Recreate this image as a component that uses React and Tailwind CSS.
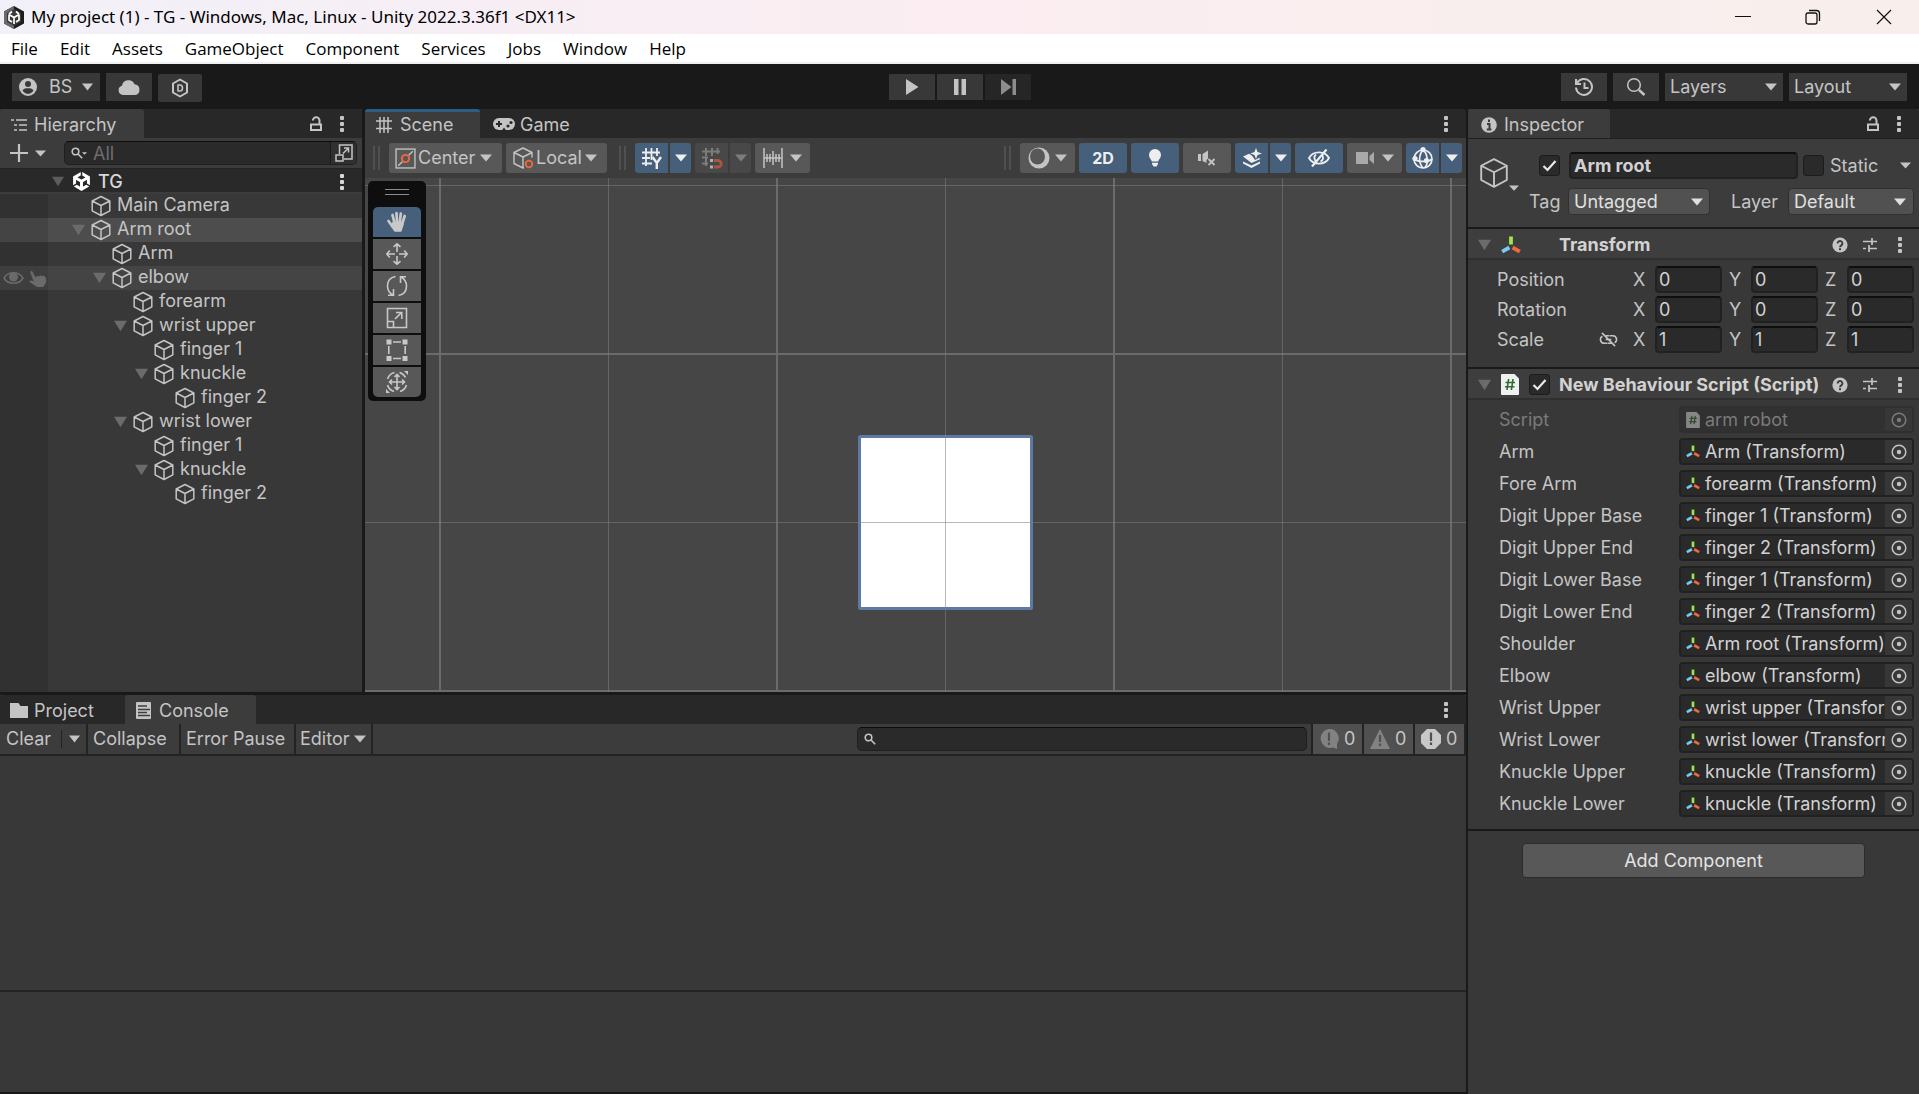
import React from "react";
import { SiUnity } from "react-icons/si";

/* ---------- icons ---------- */

const Arrow = ({ className = "w-[12px] h-[8px]" }) => (
  <svg viewBox="0 0 12 8" preserveAspectRatio="none" className={"shrink-0 " + className} fill="currentColor" aria-hidden="true">
    <path d="M0 .5h12L6 7.5z" />
  </svg>
);

const Dots = () => (
  <svg viewBox="0 0 6 18" className="w-[6px] h-[18px] shrink-0" fill="currentColor" aria-hidden="true">
    <rect x="1" y="1" width="4" height="4" rx="1" />
    <rect x="1" y="7" width="4" height="4" rx="1" />
    <rect x="1" y="13" width="4" height="4" rx="1" />
  </svg>
);

const Lock = () => (
  <svg viewBox="0 0 14 16" className="w-[14px] h-[16px] shrink-0" fill="none" stroke="currentColor" strokeWidth="2" aria-hidden="true">
    <path d="M2 8.500h10V14H2zM10.500 8V4.500a3.300 3.300 0 0 0-6.600 0" />
  </svg>
);

const Cube = ({ className = "w-[20px] h-[22px]", sw = 1.5 }) => (
  <svg viewBox="0 0 20 22" className={"shrink-0 " + className} fill="none" stroke="currentColor" strokeWidth={sw} strokeLinejoin="round" aria-hidden="true">
    <path d="M10 1.500 18.800 6v9.800L10 20.500 1.200 15.800V6zM1.200 6 10 10.500 18.800 6M10 10.500v10" />
  </svg>
);

const Axes = ({ className = "w-[14px] h-[15px]" }) => (
  <svg viewBox="0 0 20 18" className={"shrink-0 " + className} fill="none" strokeWidth="3.800" aria-hidden="true">
    <path d="M10 .5v8" stroke="#9fe64c" />
    <path d="M8.400 11.500 1.200 15.600" stroke="#7cc9f5" />
    <path d="M11.600 11.500l7.200 4.100" stroke="#f2683c" />
  </svg>
);

const ScriptIcon = ({ className = "w-[18px] h-[21px]" }) => (
  <svg viewBox="0 0 18 21" className={"shrink-0 " + className} aria-hidden="true">
    <path d="M1 0h12.500L18 4.500V20a1 1 0 0 1-1 1H1a1 1 0 0 1-1-1V1a1 1 0 0 1 1-1z" fill="#f0f0f0" />
    <path d="M7.600 5 6 16M12 5l-1.600 11M4.500 8.500h9.500M4 12.700h9.500" stroke="#2f6b2f" strokeWidth="1.600" fill="none" />
  </svg>
);

const Target = () => (
  <svg viewBox="0 0 16 16" className="w-[16px] h-[16px]" aria-hidden="true">
    <circle cx="8" cy="8" r="6.800" fill="none" stroke="currentColor" strokeWidth="1.500" />
    <circle cx="8" cy="8" r="2.200" fill="currentColor" />
  </svg>
);

const Help = () => (
  <svg viewBox="0 0 16 16" className="w-[16px] h-[16px]" aria-hidden="true">
    <circle cx="8" cy="8" r="7.600" fill="currentColor" />
    <path d="M5.600 6.400a2.400 2.400 0 1 1 3.700 2c-.9.6-1.300.9-1.300 1.800" stroke="#3c3c3c" strokeWidth="1.900" fill="none" />
    <rect x="7" y="11.200" width="2" height="2" fill="#3c3c3c" />
  </svg>
);

const Preset = () => (
  <svg viewBox="0 0 16 16" className="w-[16px] h-[16px]" fill="none" stroke="currentColor" strokeWidth="1.700" aria-hidden="true">
    <path d="M1 4.500h8.500M10 1v7M10 4.500h5M1 11.500h3M7 8v7M7 11.500h8" />
  </svg>
);

const GridHash = ({ className = "w-[16px] h-[16px]" }) => (
  <svg viewBox="0 0 16 16" className={"shrink-0 " + className} fill="none" stroke="currentColor" strokeWidth="1.500" aria-hidden="true">
    <path d="M4 0v16M8 0v16M12 0v16M0 4h16M0 11.500h16" />
  </svg>
);

const Magnifier = ({ className = "w-[12px] h-[12px]", sw = 1.600 }) => (
  <svg viewBox="0 0 12 12" className={"shrink-0 " + className} fill="none" stroke="currentColor" strokeWidth={sw} aria-hidden="true">
    <circle cx="4.500" cy="4.500" r="3.300" />
    <path d="m7 7 4.200 4.200" />
  </svg>
);

/* ---------- shared controls ---------- */

const Tick = ({ on, label }) => (
  <span className="relative flex size-[21px] shrink-0">
    <input
      type="checkbox"
      defaultChecked={on}
      aria-label={label}
      className="peer size-full appearance-none rounded-[3px] border border-[#1c1c1c] bg-[#2a2a2a]"
    />
    <svg viewBox="0 0 21 21" className="pointer-events-none absolute inset-0 hidden peer-checked:block" fill="none" stroke="#e8e8e8" strokeWidth="2.200" aria-hidden="true">
      <path d="m4.500 11 4 4 8-9" />
    </svg>
  </span>
);

const Drop = ({ value, label, className, arrow = "right-[6px]", pad = "pl-[5px]" }) => (
  <span className={"relative flex items-center " + className}>
    <select aria-label={label} className={"size-full appearance-none bg-transparent outline-none " + pad}>
      <option>{value}</option>
    </select>
    <span className={"pointer-events-none absolute " + arrow}>
      <Arrow />
    </span>
  </span>
);

const Grip = () => <span className="h-[24px] w-[7px] shrink-0 border-x-2 border-[#505050]" />;

/* ---------- window chrome ---------- */

const TitleBar = () => (
  <header className="flex h-[34px] shrink-0 items-center bg-linear-to-r from-[#f2f0f8] via-[#fbedf1] to-[#f8efec] pl-[4px] font-['Noto_Sans',sans-serif] text-[17px] text-black">
    <svg viewBox="0 0 20 23" className="h-[23px] w-[20px]" aria-hidden="true">
      <path d="M10 0l10 5.500v12L10 23 0 17.500v-12z" fill="#1d1d1d" />
      <path d="M10 0 0 5.500v12L10 23z" fill="#6a6a6a" />
      <path d="M10 3 3 7v9l7 4 7-4V7z" fill="#3a3a3a" />
      <path d="M10 11.500V18M10 11.500 5 8.500M10 11.500l5-3M5 8.500V14l3 2M15 8.500V14l-3 2M8 5.500 5 8M12 5.500 15 8" stroke="#fff" strokeWidth="1.700" fill="none" />
    </svg>
    <h1 className="ml-[7px] whitespace-nowrap">My project (1) - TG - Windows, Mac, Linux - Unity 2022.3.36f1 &lt;DX11&gt;</h1>
    <div className="ml-auto flex h-full">
      <button aria-label="Minimize" className="grid w-[70px] place-items-center">
        <svg viewBox="0 0 16 16" className="size-[16px]" stroke="#111" fill="none"><path d="M0 7.500h16" /></svg>
      </button>
      <button aria-label="Restore" className="grid w-[70px] place-items-center">
        <svg viewBox="0 0 16 16" className="size-[16px]" stroke="#111" fill="none" strokeWidth="1.300">
          <rect x="1" y="4" width="11" height="11" rx="2" />
          <path d="M4 1.500h7.500a3 3 0 0 1 3 3V12" />
        </svg>
      </button>
      <button aria-label="Close" className="grid w-[71px] place-items-center">
        <svg viewBox="0 0 16 16" className="size-[16px]" stroke="#111" fill="none" strokeWidth="1.200"><path d="m1 1 14 14M15 1 1 15" /></svg>
      </button>
    </div>
  </header>
);

const MENUS = ["File", "Edit", "Assets", "GameObject", "Component", "Services", "Jobs", "Window", "Help"];

const MenuBar = () => (
  <nav className="flex h-[30px] shrink-0 items-center gap-[22px] border-b-2 border-[#f0f0f0] bg-white pt-[2px] pl-[11px] font-['Open_Sans','Noto_Sans',sans-serif] text-[17px] text-black">
    {MENUS.map((m) => (
      <button key={m}>{m}</button>
    ))}
  </nav>
);

const MainToolbar = () => (
  <div className="grid h-[45px] shrink-0 grid-cols-[1fr_auto_1fr] items-center bg-[#191919] px-[12px]">
    <div className="flex items-center gap-[6px]">
      <button className="flex h-[28px] w-[88px] items-center bg-[#383838] pl-[7px]">
        <svg viewBox="0 0 18 18" className="size-[18px]" aria-hidden="true">
          <circle cx="9" cy="9" r="9" fill="#c4c4c4" />
          <circle cx="9" cy="6" r="3" fill="#383838" />
          <path d="M3.500 12.500C5 10.500 6.500 10.300 9 10.300s4 .2 5.500 2.200C13 15 11 15.800 9 15.800S5 15 3.500 12.500z" fill="#383838" />
        </svg>
        <span className="ml-[12px]">BS</span>
        <Arrow className="ml-[10px] h-[8px] w-[11px]" />
      </button>
      <button aria-label="Cloud services" className="grid h-[28px] w-[46px] place-items-center bg-[#383838]">
        <svg viewBox="0 0 22 16" className="h-[16px] w-[22px]" fill="currentColor"><path d="M5 16a4.700 4.700 0 0 1-1-9.200A6.500 6.500 0 0 1 16.500 5.300 5.400 5.400 0 0 1 17 16z" /></svg>
      </button>
      <button aria-label="Version control" className="mt-[2px] grid h-[28px] w-[44px] place-items-center rounded-[2px] bg-[#383838]">
        <svg viewBox="0 0 18 20" className="h-[20px] w-[18px]" fill="none" stroke="currentColor" strokeWidth="2" strokeLinejoin="round">
          <path d="m9 1.500 7 4v9l-7 4-7-4v-9z" />
          <path d="M7 7h2a2.500 3 0 0 1 0 6H7z" strokeWidth="1.600" />
        </svg>
      </button>
    </div>
    <div className="flex gap-[2px]">
      <button aria-label="Play" className="grid h-[26px] w-[46px] place-items-center bg-[#383838]">
        <svg viewBox="0 0 14 16" className="h-[16px] w-[14px]" fill="currentColor"><path d="M1 0l12.500 8L1 16z" /></svg>
      </button>
      <button aria-label="Pause" className="grid h-[26px] w-[46px] place-items-center bg-[#383838]">
        <svg viewBox="0 0 12 16" className="h-[16px] w-[12px]" fill="currentColor"><path d="M0 0h4.500v16H0zM7.500 0H12v16H7.500z" /></svg>
      </button>
      <button aria-label="Step" className="grid h-[26px] w-[46px] place-items-center bg-[#262626] text-[#8c8c8c]">
        <svg viewBox="0 0 16 16" className="size-[16px]" fill="currentColor"><path d="M1 0l10.500 8L1 16zM12.500 0H16v16h-3.500z" /></svg>
      </button>
    </div>
    <div className="flex items-center justify-end gap-[6px]">
      <button aria-label="Undo history" className="grid h-[28px] w-[46px] place-items-center bg-[#383838]">
        <svg viewBox="0 0 20 20" className="size-[20px]" fill="none" stroke="currentColor" strokeWidth="2">
          <path d="M3 6a8 8 0 1 1-1 4.500M2 2v5h5M10.500 5.500V11h4" />
        </svg>
      </button>
      <button aria-label="Search" className="grid h-[28px] w-[46px] place-items-center bg-[#383838]">
        <svg viewBox="0 0 20 20" className="size-[20px]" fill="none" stroke="currentColor">
          <circle cx="8" cy="8" r="6.300" strokeWidth="1.500" />
          <path d="m13 13 5.500 5" strokeWidth="2.500" />
        </svg>
      </button>
      <Drop label="Layers" value="Layers" className="h-[28px] w-[118px] bg-[#383838]" />
      <Drop label="Layout" value="Layout" className="h-[28px] w-[118px] bg-[#383838]" />
    </div>
  </div>
);

/* ---------- hierarchy ---------- */

const NODES = [
  { name: "Main Camera", depth: 0 },
  { name: "Arm root", depth: 0, open: true, row: "bg-[#4d4d4d]", gutter: "bg-[#444444]" },
  { name: "Arm", depth: 1 },
  { name: "elbow", depth: 1, open: true, row: "bg-[#444444]", gutter: "bg-[#3e3e3e]", hover: true },
  { name: "forearm", depth: 2 },
  { name: "wrist upper", depth: 2, open: true },
  { name: "finger 1", depth: 3 },
  { name: "knuckle", depth: 3, open: true },
  { name: "finger 2", depth: 4 },
  { name: "wrist lower", depth: 2, open: true },
  { name: "finger 1", depth: 3 },
  { name: "knuckle", depth: 3, open: true },
  { name: "finger 2", depth: 4 },
];

const INDENT = ["pl-[24px]", "pl-[45px]", "pl-[66px]", "pl-[87px]", "pl-[108px]"];

const Hierarchy = () => (
  <section className="flex w-[362px] shrink-0 flex-col overflow-hidden">
    <div className="flex h-[29px] shrink-0 items-center rounded-t-[3px] bg-[#282828]">
      <div className="flex h-full w-[144px] items-center gap-[7px] rounded-t-[3px] bg-[#3c3c3c] pt-[2px] pl-[11px]">
        <svg viewBox="0 0 16 14" className="h-[14px] w-[16px]" fill="none" stroke="currentColor" strokeWidth="1.600">
          <path d="M0 2h3M5 2h11M3 7h3M8 7h8M3 12h3M8 12h8" />
        </svg>
        Hierarchy
      </div>
      <button aria-label="Lock hierarchy" className="ml-auto"><Lock /></button>
      <button aria-label="Hierarchy menu" className="mr-[17px] ml-[16px]"><Dots /></button>
    </div>
    <div className="flex h-[31px] shrink-0 items-center border-b border-[#232323] bg-[#3c3c3c] pl-[10px] pr-[5px]">
      <button aria-label="Create" className="flex items-center gap-[7px]">
        <svg viewBox="0 0 18 18" className="size-[18px]" stroke="currentColor" strokeWidth="2.200"><path d="M9 0v18M0 9h18" /></svg>
        <Arrow className="h-[7px] w-[11px]" />
      </button>
      <div className="ml-[18px] flex h-[24px] min-w-0 flex-1 items-center overflow-hidden rounded-[5px] border border-[#1f1f1f] border-t-[#0d0d0d] bg-[#2a2a2a] pl-[6px]">
        <Magnifier />
        <Arrow className="-ml-px h-[3px] w-[5px]" />
        <input aria-label="Search hierarchy" placeholder="All" className="ml-[6px] h-full min-w-0 flex-1 bg-transparent outline-none placeholder:text-[#6e6e6e]" />
        <button aria-label="Open in search" className="grid h-full w-[26px] shrink-0 place-items-center border-l border-[#1a1a1a] bg-[#303030]">
          <svg viewBox="0 0 18 18" className="size-[18px]" fill="none" stroke="currentColor" strokeWidth="1.500">
            <path d="M4.500 10V1h12.500v14H9M1 11h7v6H1zM8 9.500l5.500-5.500M9 4h4.500v4.500" />
          </svg>
        </button>
      </div>
    </div>
    <div className="flex h-[25px] shrink-0 items-center border-b-2 border-[#3c3c3c] bg-[#292929] pt-[2px] pl-[52px] font-medium text-[#d8d8d8]">
      <Arrow className="h-[11px] w-[12px] text-[#5c5c5c]" />
      <SiUnity className="ml-[8px] size-[19px] text-white" />
      <span className="ml-[7px] flex-1">TG</span>
      <button aria-label="Scene menu" className="mr-[17px]"><Dots /></button>
    </div>
    <ul className="flex min-h-0 flex-1 flex-col">
      {NODES.map((n, i) => (
        <li key={i} className="flex h-[24px] shrink-0">
          <span className={"flex w-[48px] shrink-0 items-center justify-center gap-[5px] text-[#6a6a6a] " + (n.gutter || "bg-[#313131]")}>
            {n.hover && (
              <>
                <svg viewBox="0 0 21 14" className="h-[14px] w-[21px]" fill="none" stroke="currentColor" strokeWidth="1.600">
                  <path d="M1 7C5 0 16 0 20 7 16 14 5 14 1 7z" />
                  <circle cx="10.500" cy="6" r="4.500" fill="currentColor" stroke="none" />
                </svg>
                <svg viewBox="0 0 18 18" className="size-[17px]" fill="currentColor">
                  <path d="M1.500 1.500c.9-.9 2-.5 2.500.5l3 6 1.500-2 2 1 1.500-1.500 2 1.200 1.800-.8L18 8.500v5L15 18H8.500L1 13c-.8-1 0-2 1-2l3 .8L1.500 3.500z" />
                </svg>
              </>
            )}
          </span>
          <span className={"flex flex-1 items-center " + INDENT[n.depth] + " " + (n.row || "")}>
            <span className="w-[19px] text-[#6b6b6b]">{n.open && <Arrow className="h-[12px] w-[13px]" />}</span>
            <Cube />
            <span className="ml-[6px] pb-[2px] whitespace-nowrap">{n.name}</span>
          </span>
        </li>
      ))}
      <li className="w-[48px] flex-1 bg-[#313131]" />
    </ul>
  </section>
);

/* ---------- scene view ---------- */

const TBtn = ({ label, on, w = "w-[48px]", r = "rounded-[3px]", dim, children }) => (
  <button
    aria-label={label}
    className={"flex h-[30px] shrink-0 items-center justify-center " + w + " " + r + " " + (on ? "bg-[#46607c] text-[#eeeeee]" : dim ? "bg-[#484848] text-[#7c7c7c]" : "bg-[#585858] text-[#c4c4c4]")}
  >
    {children}
  </button>
);

const SceneToolbar = () => (
  <div className="flex h-[40px] shrink-0 items-center gap-[4px] bg-[#3c3c3c] pl-[8px] pr-[4px]">
    <Grip />
    <label className="ml-[5px] flex h-[30px] w-[113px] shrink-0 items-center rounded-[3px] bg-[#585858] pl-[6px]">
      <svg viewBox="0 0 20 20" className="size-[21px] shrink-0" fill="none" stroke="#c4c4c4" strokeWidth="1.300" aria-hidden="true">
        <rect x="1" y="1" width="18" height="18" />
        <path d="m3 17 4-4M13 7l4-4" />
        <circle cx="10" cy="10" r="3.500" stroke="#f2683c" strokeWidth="1.800" />
      </svg>
      <Drop label="Handle position" value="Center" pad="pl-[2px]" arrow="right-[10px]" className="h-full flex-1" />
    </label>
    <label className="flex h-[30px] w-[101px] shrink-0 items-center rounded-[3px] bg-[#585858] pl-[6px]">
      <svg viewBox="0 0 22 22" className="size-[22px] shrink-0" fill="none" stroke="#c4c4c4" strokeWidth="1.400" strokeLinejoin="round" aria-hidden="true">
        <path d="M12 20.500 11 21l-9-4.500v-11L11 1l9 4.500v5M2 5.500 11 10l9-4.500M11 10v11" />
        <circle cx="17" cy="17" r="3.300" stroke="#f2683c" strokeWidth="1.800" />
      </svg>
      <Drop label="Handle rotation" value="Local" pad="pl-[2px]" arrow="right-[10px]" className="h-full flex-1" />
    </label>
    <span className="ml-[8px] flex"><Grip /></span>
    <div className="ml-[5px] flex gap-[2px]">
      <TBtn label="Grid visibility" on w="w-[33px]" r="rounded-l-[3px]">
        <svg viewBox="0 0 22 22" className="size-[22px]" fill="none" stroke="currentColor" strokeWidth="1.800">
          <path d="M5 1v18M10.500 1v12M16 1v8M1 5.500h18M1 11h8M1 16.500h10" />
          <path d="m11.500 10 4.300 6 4.200-6M15.800 15v7" strokeWidth="2.400" />
        </svg>
      </TBtn>
      <TBtn label="Grid options" on w="w-[21px]" r="rounded-r-[3px]"><Arrow /></TBtn>
    </div>
    <div className="flex gap-[2px]">
      <TBtn label="Grid snapping" dim w="w-[33px]" r="rounded-l-[3px]">
        <svg viewBox="0 0 22 22" className="size-[22px]" fill="none" stroke="currentColor" strokeWidth="2">
          <path d="M5 1v8M11 1v8M16.500 1v6M1 4.500h18M1 10.500h6M5 10v9M1 16.500h6" />
          <path d="M13 13.500h4a3.200 3.200 0 0 1 0 6.500h-4" stroke="#a85640" strokeWidth="2.800" />
          <path d="M9 13.500h3M9 20h3" stroke="#b0b0b0" strokeWidth="2.800" />
        </svg>
      </TBtn>
      <TBtn label="Snap options" dim w="w-[21px]" r="rounded-r-[3px]"><Arrow /></TBtn>
    </div>
    <TBtn label="Snap increment" w="w-[55px]">
      <svg viewBox="0 0 20 20" className="mr-[7px] size-[20px]" fill="none" stroke="currentColor" strokeWidth="1.500">
        <path d="M1 0v20M19 0v20M1 10h18M4 6v8M7 6v8M10 3v14M13 6v8M16 6v8" />
      </svg>
      <Arrow />
    </TBtn>
    <span className="ml-auto flex"><Grip /></span>
    <span className="w-[1px]" />
    <TBtn label="Draw mode" w="w-[55px]">
      <svg viewBox="0 0 22 22" className="mr-[5px] size-[22px]" aria-hidden="true">
        <circle cx="11" cy="11" r="10.500" fill="#c4c4c4" />
        <ellipse cx="9.500" cy="9.500" rx="7.500" ry="8" fill="#585858" />
      </svg>
      <Arrow />
    </TBtn>
    <TBtn on><span className="text-[16px] font-bold">2D</span></TBtn>
    <TBtn label="Scene lighting" on>
      <svg viewBox="0 0 14 18" className="h-[18px] w-[14px]" fill="currentColor">
        <path d="M7 0a6 6 0 0 1 6 6c0 3-2.500 4.500-2.800 6.500H3.800C3.500 10.500 1 9 1 6a6 6 0 0 1 6-6zM4 13.800h6V15l-1.500 2.500h-3L4 15z" />
      </svg>
    </TBtn>
    <TBtn label="Scene audio">
      <svg viewBox="0 0 18 16" className="h-[16px] w-[18px]" fill="currentColor">
        <path d="M0 4h3v7H0zM4.500 4 10 .5v8L8.500 10v3L4.500 11z" />
        <path d="m10.500 9 6 6M16.500 9l-6 6" stroke="currentColor" strokeWidth="1.800" />
      </svg>
    </TBtn>
    <div className="flex gap-[2px]">
      <TBtn label="Effects" on w="w-[33px]" r="rounded-l-[3px]">
        <svg viewBox="0 0 20 20" className="size-[20px]" fill="currentColor">
          <path d="M14 0l1.500 4L20 5.500 15.500 7 14 11l-1.500-4L8.500 5.500l4-1.500z" />
          <path d="M1 8.500 7 5.800l2.500 1.500L11 9l2 3 4-2 1.500 1L9.500 15z" />
          <path d="M1 13.500 9.500 17.500l8.500-4v2L9.500 20 1 15.500z" />
        </svg>
      </TBtn>
      <TBtn label="Effects options" on w="w-[21px]" r="rounded-r-[3px]"><Arrow /></TBtn>
    </div>
    <TBtn label="Hidden objects" on>
      <svg viewBox="0 0 22 18" className="h-[18px] w-[22px]" fill="none" stroke="currentColor" strokeWidth="1.900">
        <path d="M1 9C5 1.500 17 1.500 21 9 17 16.500 5 16.500 1 9z" />
        <path d="M8 5.500a4 4 0 0 0 1 7M14 6a4 4 0 0 1-1.500 6.500" />
        <path d="M18.500.5 4 17.500" strokeWidth="2.200" />
      </svg>
    </TBtn>
    <TBtn label="Camera settings" w="w-[55px]">
      <svg viewBox="0 0 18 14" className="mr-[8px] h-[14px] w-[18px]" fill="#a9a9a9"><path d="M0 1h12v12H0zM13.500 5 18 1v12l-4.500-4z" /></svg>
      <Arrow />
    </TBtn>
    <div className="flex gap-[2px]">
      <TBtn label="Gizmos" on w="w-[33px]" r="rounded-l-[3px]">
        <svg viewBox="0 0 22 22" className="size-[22px]" fill="none" stroke="currentColor" strokeWidth="1.700">
          <circle cx="11" cy="12" r="9" />
          <path d="M11 3c-4.500 5-4.500 13 0 18M11 3c4.500 3 6 14 1.500 18M2 12c4 3 14 3.500 18 0" />
          <g fill="currentColor" stroke="none"><circle cx="11" cy="2.600" r="2.600" /><circle cx="3" cy="11.500" r="2.600" /><circle cx="14.500" cy="13.500" r="2.600" /></g>
        </svg>
      </TBtn>
      <TBtn label="Gizmo options" on w="w-[21px]" r="rounded-r-[3px]"><Arrow /></TBtn>
    </div>
  </div>
);

const TOOLS = [
  {
    label: "View tool",
    on: true,
    icon: (
      <g fill="none" stroke="currentColor" strokeWidth="2.700" strokeLinecap="round">
        <path d="M8.500 12 6.500 4M11 11 10.500 2.200M13.800 11 14.800 2.500M16.300 12.500 18.700 5M6.500 15.500 2.500 10" />
        <path d="M7 11.500h9.500l.5 2-2.200 6.500H9L5.500 15z" fill="currentColor" strokeWidth="1.500" strokeLinejoin="round" />
      </g>
    ),
  },
  { label: "Move tool", icon: <path d="M11 1v8M11 13v8M1 11h8M13 11h8M7.500 3.800 11 .8l3.500 3M7.500 18.200l3.500 3 3.500-3M3.800 7.500.8 11l3 3.500M18.200 7.500l3 3.500-3 3.500" /> },
  { label: "Rotate tool", icon: <path d="M9.500 1.500C4 2.500 1.500 6.500 1.500 11c0 4 2 7 5.500 9M7.500 14v6.200H2M12.500 20.500C18 19.500 20.500 15.500 20.500 11c0-4-2-7-5.500-9M14.500 8V1.800H20" /> },
  { label: "Scale tool", icon: <path d="M1.500 1.500h19v19h-19zM1.500 14.500h6v6M9 12l6.500-6.500M10 5.500h5.800V12" /> },
  {
    label: "Rect tool",
    icon: (
      <>
        <path d="M7 3h8M7 19.500h8M2.800 7v8M19.200 7v8" />
        <path d="M.5.5h5v5h-5zM16.500.5h5v5h-5zM.5 17h5v5h-5zM16.500 17h5v5h-5z" fill="currentColor" stroke="none" />
      </>
    ),
  },
  {
    label: "Transform tool",
    icon: (
      <>
        <path d="M11 3.500v15M3.500 11h15M8.500 6 11 3.500 13.500 6M8.500 16l2.500 2.500 2.500-2.500M6 8.500 3.500 11 6 13.500M16 8.500l2.500 2.500-2.500 2.500M8.500 1.500A10 10 0 0 0 1.500 8M13.500 1.500A10 10 0 0 1 19.500 6.500M1.500 14a10 10 0 0 0 6.500 6.500M14 20.500a10 10 0 0 0 6.500-6.500" />
        <path d="M18 0h4v4zM0 18v4h4z" fill="currentColor" stroke="none" />
      </>
    ),
  },
];

const SceneView = () => (
  <div className="relative min-h-0 flex-1 overflow-hidden bg-[#464646]">
    <svg className="absolute inset-0 size-full" aria-hidden="true">
      <g stroke="#6b6b6b" strokeWidth="2">
        <path d="M75 0v2000M412 0v2000M749 0v2000M1086 0v2000M0 176h4000M0 513h4000" />
      </g>
      <rect x="494.500" y="258.500" width="172" height="172" rx="1" fill="#fff" stroke="#5f7aa2" strokeWidth="3" />
      <g stroke="#808080" strokeOpacity=".55" strokeWidth="1">
        <path d="M243.500 0v2000M580.500 0v2000M917.500 0v2000M0 7.500h4000M0 344.500h4000" />
      </g>
    </svg>
    <div className="absolute top-[3px] left-[3px] flex flex-col items-center gap-[2px] rounded-[5px] bg-[#0e0e0e] px-[5px] pt-[8px] pb-[4px]">
      <span className="mb-[10px] h-[6px] w-[24px] border-y border-[#8a8a8a]" />
      {TOOLS.map((t, i) => (
        <TBtn key={t.label} label={t.label} on={t.on} r={i === 0 ? "rounded-t-[5px]" : i === 5 ? "rounded-b-[5px]" : ""}>
          <svg viewBox="0 0 22 22" className="size-[22px] text-[#c8c8c8]" fill="none" stroke="currentColor" strokeWidth="1.600">
            {t.icon}
          </svg>
        </TBtn>
      ))}
    </div>
  </div>
);

const Scene = () => (
  <section className="flex min-w-0 flex-1 flex-col">
    <div className="flex h-[29px] shrink-0 items-center rounded-t-[3px] bg-[#282828]">
      <div className="flex h-full w-[115px] items-center gap-[8px] rounded-t-[3px] border-t-[3px] border-[#2c5d87] bg-[#3c3c3c] pl-[11px]">
        <GridHash />
        Scene
      </div>
      <div className="flex items-center gap-[5px] pt-[2px] pl-[13px]">
        <svg viewBox="0 0 22 13" className="h-[13px] w-[22px]" aria-hidden="true">
          <rect width="22" height="12" rx="6" fill="#c4c4c4" />
          <path d="M6 3v6M3 6h6" stroke="#282828" strokeWidth="2" />
          <circle cx="15" cy="8" r="1.600" fill="#282828" />
          <circle cx="18" cy="4.500" r="1.600" fill="#282828" />
          <path d="M8.500 13 11 9.500l2.500 3.500z" fill="#282828" />
        </svg>
        Game
      </div>
      <button aria-label="Scene view menu" className="mr-[17px] ml-auto"><Dots /></button>
    </div>
    <SceneToolbar />
    <SceneView />
  </section>
);

/* ---------- console ---------- */

const Console = () => (
  <section className="flex min-h-0 flex-[399] flex-col bg-[#383838]">
    <div className="flex h-[29px] shrink-0 items-center rounded-t-[3px] bg-[#282828]">
      <div className="flex w-[125px] items-center gap-[6px] pt-[2px] pl-[10px]">
        <svg viewBox="0 0 18 15" className="h-[15px] w-[18px]" fill="currentColor"><path d="M0 0h8.500L10.500 3H18v12H0z" /></svg>
        Project
      </div>
      <div className="flex h-full w-[131px] items-center gap-[7px] rounded-t-[3px] bg-[#3c3c3c] pt-[2px] pl-[11px]">
        <svg viewBox="0 0 16 17" className="h-[17px] w-[16px]" aria-hidden="true">
          <rect width="15" height="17" rx="1" fill="#c4c4c4" />
          <path d="M2 4h9M2 7.500h12M2 10.500h9M2 13.500h12" stroke="#3c3c3c" strokeWidth="1.300" />
        </svg>
        Console
      </div>
      <button aria-label="Console menu" className="mr-[17px] ml-auto"><Dots /></button>
    </div>
    <div className="flex h-[32px] shrink-0 items-stretch border-b-2 border-[#232323] bg-[#3c3c3c] pl-[2px]">
      <button className="flex w-[59px] items-center pl-[4px]">Clear</button>
      <button aria-label="Clear options" className="my-[6px] flex w-[25px] items-center border-l border-[#232323] pl-[7px]"><Arrow className="h-[8px] w-[11px]" /></button>
      <button className="w-[93px] border-l-2 border-[#232323] pl-[5px] text-left">Collapse</button>
      <button className="w-[115px] border-l-2 border-[#232323] pl-[5px] text-left">Error Pause</button>
      <Drop label="Connected target" value="Editor" pad="pl-[4px]" arrow="right-[5px]" className="w-[79px] border-x-2 border-[#232323]" />
      <label className="my-[3px] mr-[4px] ml-auto flex w-[450px] items-center rounded-[5px] border border-[#1f1f1f] border-t-[#0d0d0d] bg-[#2a2a2a] pl-[6px]">
        <Magnifier className="h-[12px] w-[12px]" />
        <input aria-label="Search console" className="h-full min-w-0 flex-1 bg-transparent px-[4px] outline-none" />
      </label>
      <div className="flex gap-[2px] bg-[#232323] px-[2px]">
        <button aria-label="0 messages" className="flex w-[49px] items-center gap-[5px] bg-[#505050] pl-[6px]">
          <svg viewBox="0 0 20 20" className="size-[20px] text-[#828282]" fill="currentColor"><path d="M10 0a9.500 9.500 0 0 1 8 15v5l-4-1.500A9.500 9.500 0 1 1 10 0z" /><path d="M10 3.500V12M10 13.500v2.500" stroke="#505050" strokeWidth="2.200" /></svg>
          0
        </button>
        <button aria-label="0 warnings" className="flex w-[49px] items-center gap-[5px] bg-[#505050] pl-[6px]">
          <svg viewBox="0 0 20 20" className="size-[20px] text-[#828282]" fill="currentColor"><path d="M10 0 20 20H0z" /><path d="M10 6v7M10 14.500v2.500" stroke="#505050" strokeWidth="2.200" /></svg>
          0
        </button>
        <button aria-label="0 errors" className="flex w-[49px] items-center gap-[5px] bg-[#505050] pl-[6px]">
          <svg viewBox="0 0 20 20" className="size-[20px] text-[#c8c8c8]" fill="currentColor"><path d="M6 0h8l6 6v8l-6 6H6l-6-6V6z" /><path d="M10 3.500V12M10 13.500v2.500" stroke="#505050" strokeWidth="2.200" /></svg>
          0
        </button>
      </div>
    </div>
    <div className="flex-[237] border-b-2 border-[#232323]" />
    <div className="flex-[102] border-b-2 border-[#191919]" />
  </section>
);

/* ---------- inspector ---------- */

const FIELD = "rounded-[4px] border-2 border-[#212121] border-t-[#0e0e0e] bg-[#2a2a2a] text-[#d2d2d2] outline-none";

const HeaderIcons = () => (
  <div className="ml-auto flex shrink-0 items-center gap-[14px] pl-[12px]">
    <button aria-label="Help"><Help /></button>
    <button aria-label="Presets"><Preset /></button>
    <button aria-label="Component menu" className="ml-[5px]"><Dots /></button>
  </div>
);

const VECTORS = [
  ["Position", "0"],
  ["Rotation", "0"],
  ["Scale", "1"],
];

const REFS = [
  ["Arm", "Arm (Transform)"],
  ["Fore Arm", "forearm (Transform)"],
  ["Digit Upper Base", "finger 1 (Transform)"],
  ["Digit Upper End", "finger 2 (Transform)"],
  ["Digit Lower Base", "finger 1 (Transform)"],
  ["Digit Lower End", "finger 2 (Transform)"],
  ["Shoulder", "Arm root (Transform)"],
  ["Elbow", "elbow (Transform)"],
  ["Wrist Upper", "wrist upper (Transform)"],
  ["Wrist Lower", "wrist lower (Transform)"],
  ["Knuckle Upper", "knuckle (Transform)"],
  ["Knuckle Lower", "knuckle (Transform)"],
];

const RefRow = ({ label, value, icon, dim }) => (
  <div className={"flex h-[27px] items-center " + (dim ? "text-[#7a7a7a]" : "")}>
    <span className="w-[180px] shrink-0 whitespace-nowrap">{label}</span>
    <div className={"flex h-full min-w-0 flex-1 items-stretch rounded-[4px] border-2 " + (dim ? "border-[#2f2f2f] bg-[#313131]" : "border-[#212121] bg-[#2a2a2a]")}>
      <span className={"flex min-w-0 flex-1 items-center gap-[5px] overflow-hidden pl-[5px] whitespace-nowrap " + (dim ? "" : "text-[#d2d2d2]")}>
        {icon}
        {value}
      </span>
      <button aria-label={"Select " + label} className="grid w-[27px] shrink-0 place-items-center bg-[#373737]"><Target /></button>
    </div>
  </div>
);

const Inspector = () => (
  <aside className="flex w-[451px] shrink-0 flex-col bg-[#383838]">
    <div className="flex h-[30px] shrink-0 items-center rounded-t-[3px] border-b border-[#1f1f1f] bg-[#282828]">
      <div className="flex h-full w-[142px] items-center gap-[7px] rounded-t-[3px] bg-[#3c3c3c] pt-[2px] pl-[13px]">
        <svg viewBox="0 0 16 16" className="size-[16px]" aria-hidden="true">
          <circle cx="8" cy="8" r="7.800" fill="#c4c4c4" />
          <path d="M8 2.500v2.600M6 7h2.500v5.500M5.800 12.500h4.600" stroke="#3c3c3c" strokeWidth="2" fill="none" />
        </svg>
        Inspector
      </div>
      <button aria-label="Lock inspector" className="ml-auto"><Lock /></button>
      <button aria-label="Inspector menu" className="mr-[17px] ml-[16px]"><Dots /></button>
    </div>

    <div className="flex border-b-2 border-[#1a1a1a] bg-[#3c3c3c] pt-[13px] pr-[5px] pb-[12px] pl-[11px]">
      <button aria-label="Object icon" className="relative mt-[3px] h-[36px] w-[40px] shrink-0">
        <Cube className="h-[32px] w-[30px]" sw={1.300} />
        <Arrow className="absolute right-0 bottom-0 h-[6px] w-[10px]" />
      </button>
      <div className="min-w-0 flex-1">
        <div className="flex h-[27px] items-center pl-[20px]">
          <Tick on label="Active" />
          <input aria-label="Object name" defaultValue="Arm root" className={"ml-[9px] h-full w-[229px] px-[3px] font-bold " + FIELD} />
          <span className="ml-[5px] flex"><Tick label="Static" /></span>
          <span className="ml-[6px]">Static</span>
          <Arrow className="mr-[3px] ml-auto h-[7px] w-[11px]" />
        </div>
        <div className="mt-[9px] flex h-[27px] items-center pl-[10px]">
          <span className="w-[39px]">Tag</span>
          <Drop label="Tag" value="Untagged" pad="pl-[5px]" className="h-full w-[142px] rounded-[4px] border border-[#303030] bg-[#515151] text-[#e0e0e0]" arrow="right-[6px]" />
          <span className="ml-[21px] w-[57px]">Layer</span>
          <Drop label="Layer" value="Default" pad="pl-[5px]" className="h-full flex-1 rounded-[4px] border border-[#303030] bg-[#515151] text-[#e0e0e0]" arrow="right-[7px]" />
        </div>
      </div>
    </div>

    <div className="flex h-[31px] shrink-0 items-center border-b-2 border-[#303030] bg-[#3e3e3e] pt-[2px] pr-[16px] pl-[10px]">
      <Arrow className="h-[12px] w-[13px] text-[#6b6b6b]" />
      <Axes className="ml-[10px] h-[18px] w-[20px]" />
      <h2 className="ml-[38px] font-bold text-[#d2d2d2]">Transform</h2>
      <HeaderIcons />
    </div>
    <div className="flex flex-col gap-[3px] border-b-2 border-[#1a1a1a] pt-[6px] pr-[5px] pb-[14px] pl-[29px]">
      {VECTORS.map(([name, v]) => (
        <div key={name} className="flex h-[27px] items-center">
          <span className="w-[102px]">{name}</span>
          <span className="w-[34px]">
            {name === "Scale" && (
              <svg viewBox="0 0 20 16" className="h-[15px] w-[19px]" fill="none" stroke="currentColor" strokeWidth="1.700">
                <path d="M9 12H5.500a4 4 0 0 1-2-7.500M7 4h3.500M11 4h3.500a4 4 0 0 1 2 7.500M9.500 12H13M3 1l14 14M7 8h6" />
              </svg>
            )}
          </span>
          {["X", "Y", "Z"].map((axis) => (
            <label key={axis} className="flex h-full min-w-0 flex-1 items-center last:flex-[0_0_89px]">
              <span className="w-[22px] shrink-0">{axis}</span>
              <input aria-label={name + " " + axis} defaultValue={v} className={"h-full w-[67px] px-[2px] " + FIELD} />
            </label>
          ))}
        </div>
      ))}
    </div>

    <div className="flex h-[31px] shrink-0 items-center border-b-2 border-[#303030] bg-[#3e3e3e] pt-[2px] pr-[16px] pl-[10px]">
      <Arrow className="h-[12px] w-[13px] shrink-0 text-[#6b6b6b]" />
      <ScriptIcon className="mr-[10px] ml-[10px] h-[21px] w-[18px]" />
      <Tick on label="Enable New Behaviour Script" />
      <h2 className="ml-[9px] min-w-0 flex-1 overflow-hidden font-bold whitespace-nowrap text-[#d2d2d2]">New Behaviour Script (Script)</h2>
      <HeaderIcons />
    </div>
    <div className="flex flex-col gap-[5px] border-b-2 border-[#1a1a1a] pt-[6px] pr-[5px] pb-[12px] pl-[31px]">
      <RefRow dim label="Script" value="arm robot" icon={<ScriptIcon className="h-[16px] w-[14px] opacity-45" />} />
      {REFS.map(([label, value]) => (
        <RefRow key={label} label={label} value={value} icon={<Axes />} />
      ))}
    </div>
    <button className="mx-auto mt-[12px] h-[35px] w-[343px] rounded-[4px] border border-[#2c2c2c] bg-[#585858] text-[#e4e4e4]">Add Component</button>
  </aside>
);

export default function App() {
  return (
    <div className="flex h-screen flex-col overflow-hidden bg-[#191919] font-['Inter',sans-serif] text-[18px] leading-[22px] text-[#c4c4c4]">
      <TitleBar />
      <MenuBar />
      <MainToolbar />
      <main className="flex min-h-0 flex-1 gap-[2px]">
        <div className="flex min-w-0 flex-1 flex-col gap-[3px]">
          <div className="flex min-h-0 flex-[583] gap-[3px]">
            <div className="flex bg-[#383838]"><Hierarchy /></div>
            <Scene />
          </div>
          <Console />
        </div>
        <Inspector />
      </main>
    </div>
  );
}
